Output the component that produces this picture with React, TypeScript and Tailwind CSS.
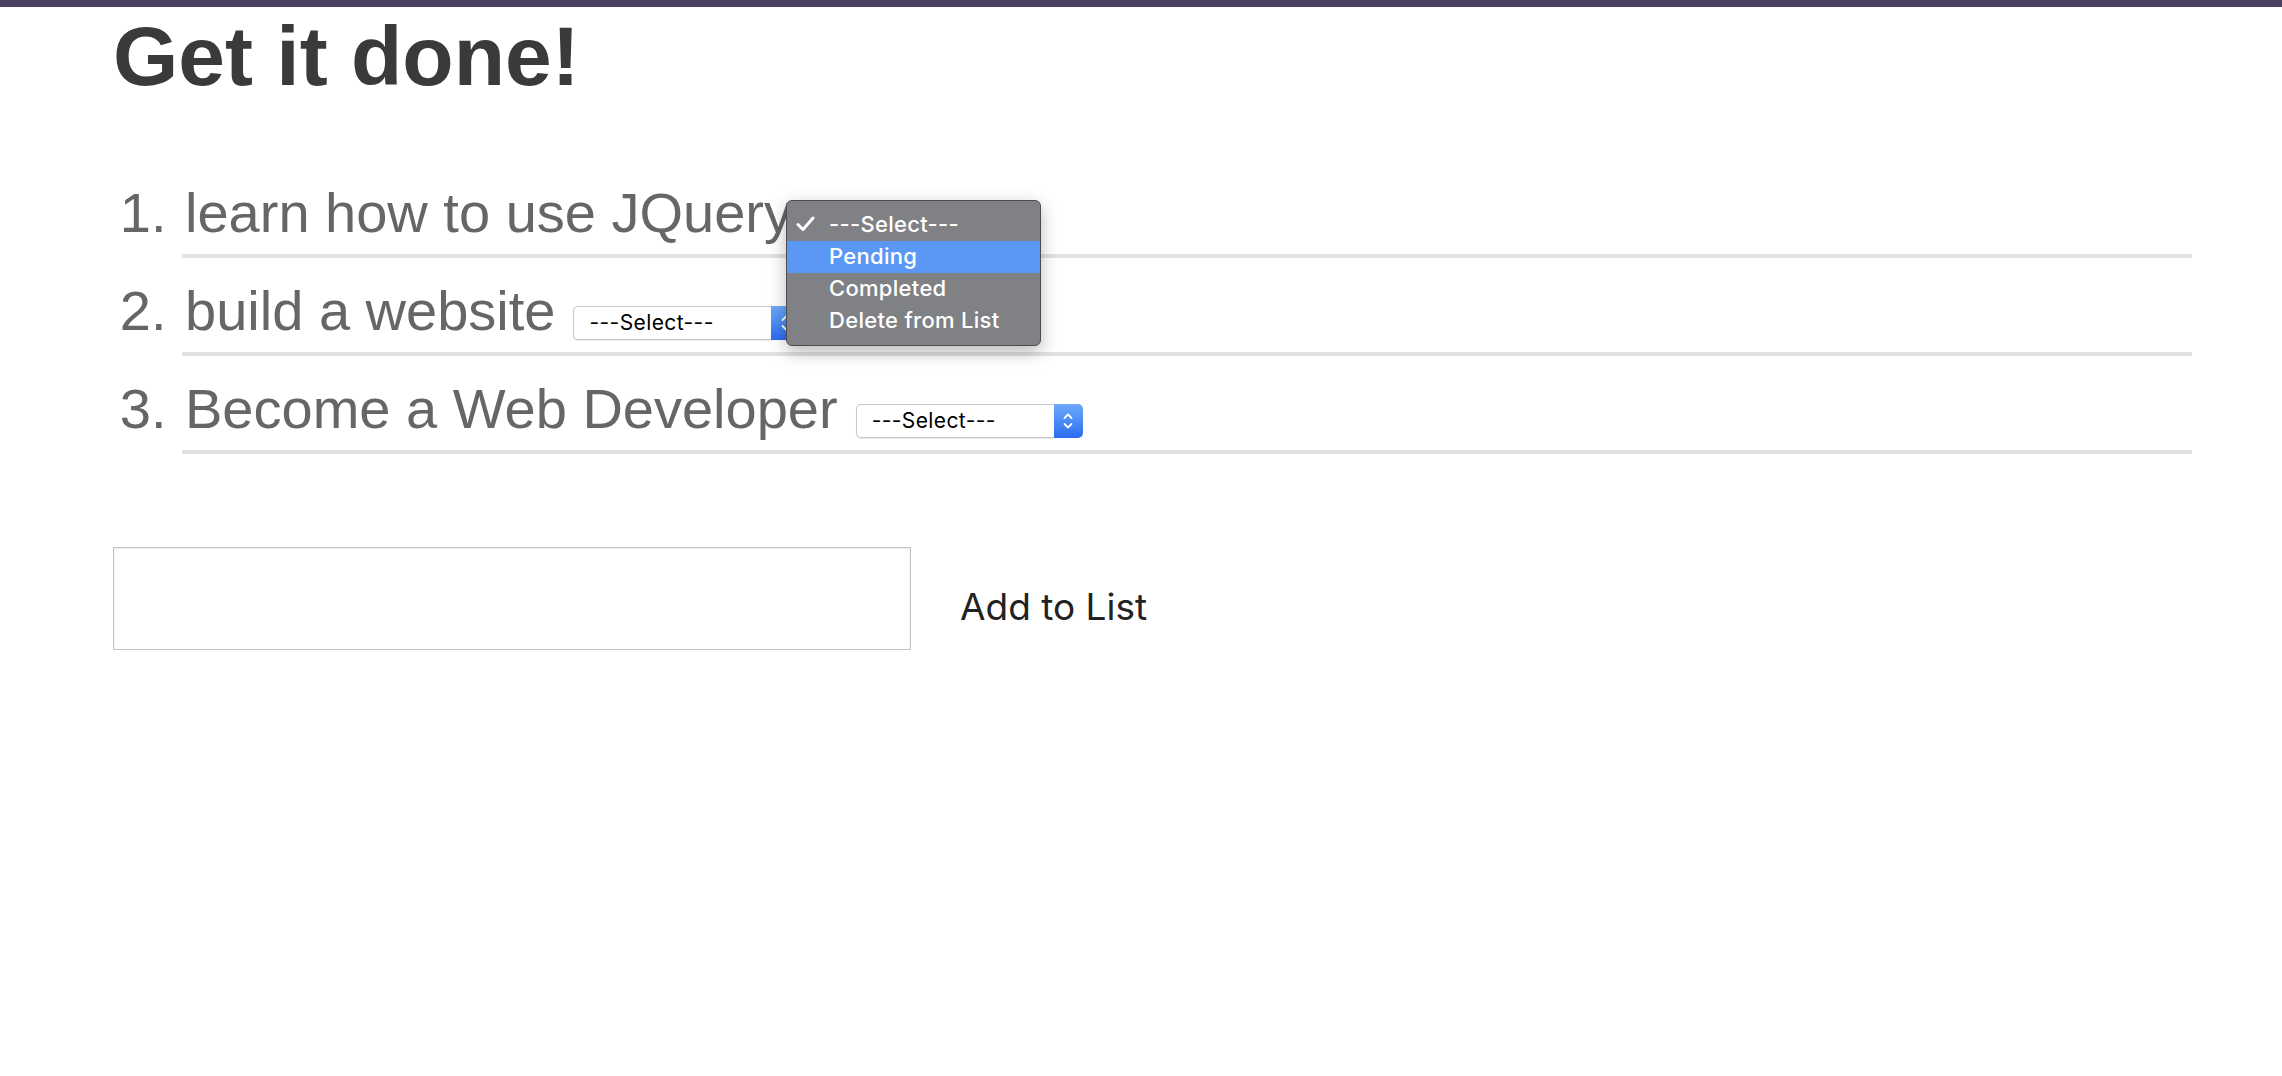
import React from "react";

function Chevrons() {
  return (
    <svg width="12" height="22" viewBox="0 0 12 22" fill="none" stroke="white" strokeWidth="1.8" strokeLinecap="round" strokeLinejoin="round">
      <path d="M2.5 8 L6 4.5 L9.5 8" />
      <path d="M2.5 14 L6 17.5 L9.5 14" />
    </svg>
  );
}

function Check() {
  return (
    <svg width="19" height="16" viewBox="0 0 19 16" fill="none" stroke="white" strokeWidth="3" strokeLinecap="round" strokeLinejoin="round">
      <path d="M2 8.5 L7 13.5 L17 2" />
    </svg>
  );
}

function SelectBox({ open = false }: { open?: boolean }) {
  return (
    <span className="relative ml-[18px] inline-flex h-[34px] w-[227px] align-baseline">
      <span
        className={
          open
            ? "invisible flex flex-1 items-center rounded-l-[5px] border-y border-l border-[#c8c8c8] bg-white pl-[15px] text-[21px] leading-[26px] tracking-[0.4px] text-black font-[family-name:Inter,sans-serif]"
            : "flex flex-1 items-center rounded-l-[5px] border-y border-l border-[#c8c8c8] bg-white pl-[15px] text-[21px] leading-[26px] tracking-[0.4px] text-black shadow-[0_1px_1px_rgba(0,0,0,0.10)] font-[family-name:Inter,sans-serif]"
        }
      >
        ---Select---
      </span>
      <span className="flex w-[29px] items-center justify-center rounded-r-[5px] bg-gradient-to-b from-[#6ea9fb] to-[#2a6cf1]">
        <Chevrons />
      </span>
      {open && (
        <span className="absolute left-[-24px] top-[-8px] z-10 block w-[255px] rounded-[6px] border border-[#4d4d4f] bg-[#808185] py-[8px] text-[22px] font-medium leading-[26px] tracking-[0.3px] text-white shadow-[0_6px_18px_rgba(0,0,0,0.28)] font-[family-name:Inter,sans-serif]">
          <span className="relative flex h-[32px] items-start pl-[42px] pt-[2px]">
            <span className="absolute left-[9px] top-[7px]">
              <Check />
            </span>
            ---Select---
          </span>
          <span className="flex h-[32px] items-start bg-[#5b98f5] pl-[42px] pt-[2px]">Pending</span>
          <span className="flex h-[32px] items-start pl-[42px] pt-[2px]">Completed</span>
          <span className="flex h-[32px] items-start pl-[42px] pt-[2px]">Delete from List</span>
        </span>
      )}
    </span>
  );
}

export default function App() {
  return (
    <div className="min-h-screen bg-white">
      <div className="h-[7px] bg-[#4b4163]" />
      <div className="pl-[113px] pr-[90px]">
        <h1 className="text-[84px] font-bold leading-[98px] text-[#3a3a3a] font-[family-name:'Liberation_Sans',Arial,sans-serif]">
          Get it done!
        </h1>
        <ol className="mt-[55px] list-decimal pl-[69px] text-[56px] leading-[63px] text-[#666666] font-[family-name:'Liberation_Sans',Arial,sans-serif]">
          <li className="border-b-4 border-[#e2e2e2] pb-[10px] pt-[21px]">
            <span className="ml-[3px]">learn how to use JQuery</span>
            <SelectBox open />
          </li>
          <li className="border-b-4 border-[#e2e2e2] pb-[10px] pt-[21px]">
            <span className="ml-[3px]">build a website</span>
            <SelectBox />
          </li>
          <li className="border-b-4 border-[#e2e2e2] pb-[10px] pt-[21px]">
            <span className="ml-[3px]">Become a Web Developer</span>
            <SelectBox />
          </li>
        </ol>
        <div className="mt-[93px] flex items-start">
          <input
            type="text"
            className="h-[103px] w-[798px] border border-[#c3c3c3] bg-white shadow-[inset_0_1px_2px_rgba(0,0,0,0.08)] outline-none"
          />
          <button className="ml-[49px] mt-[37px] text-[37px] leading-[45px] text-[#222222] font-[family-name:Inter,sans-serif]">
            Add to List
          </button>
        </div>
      </div>
    </div>
  );
}
